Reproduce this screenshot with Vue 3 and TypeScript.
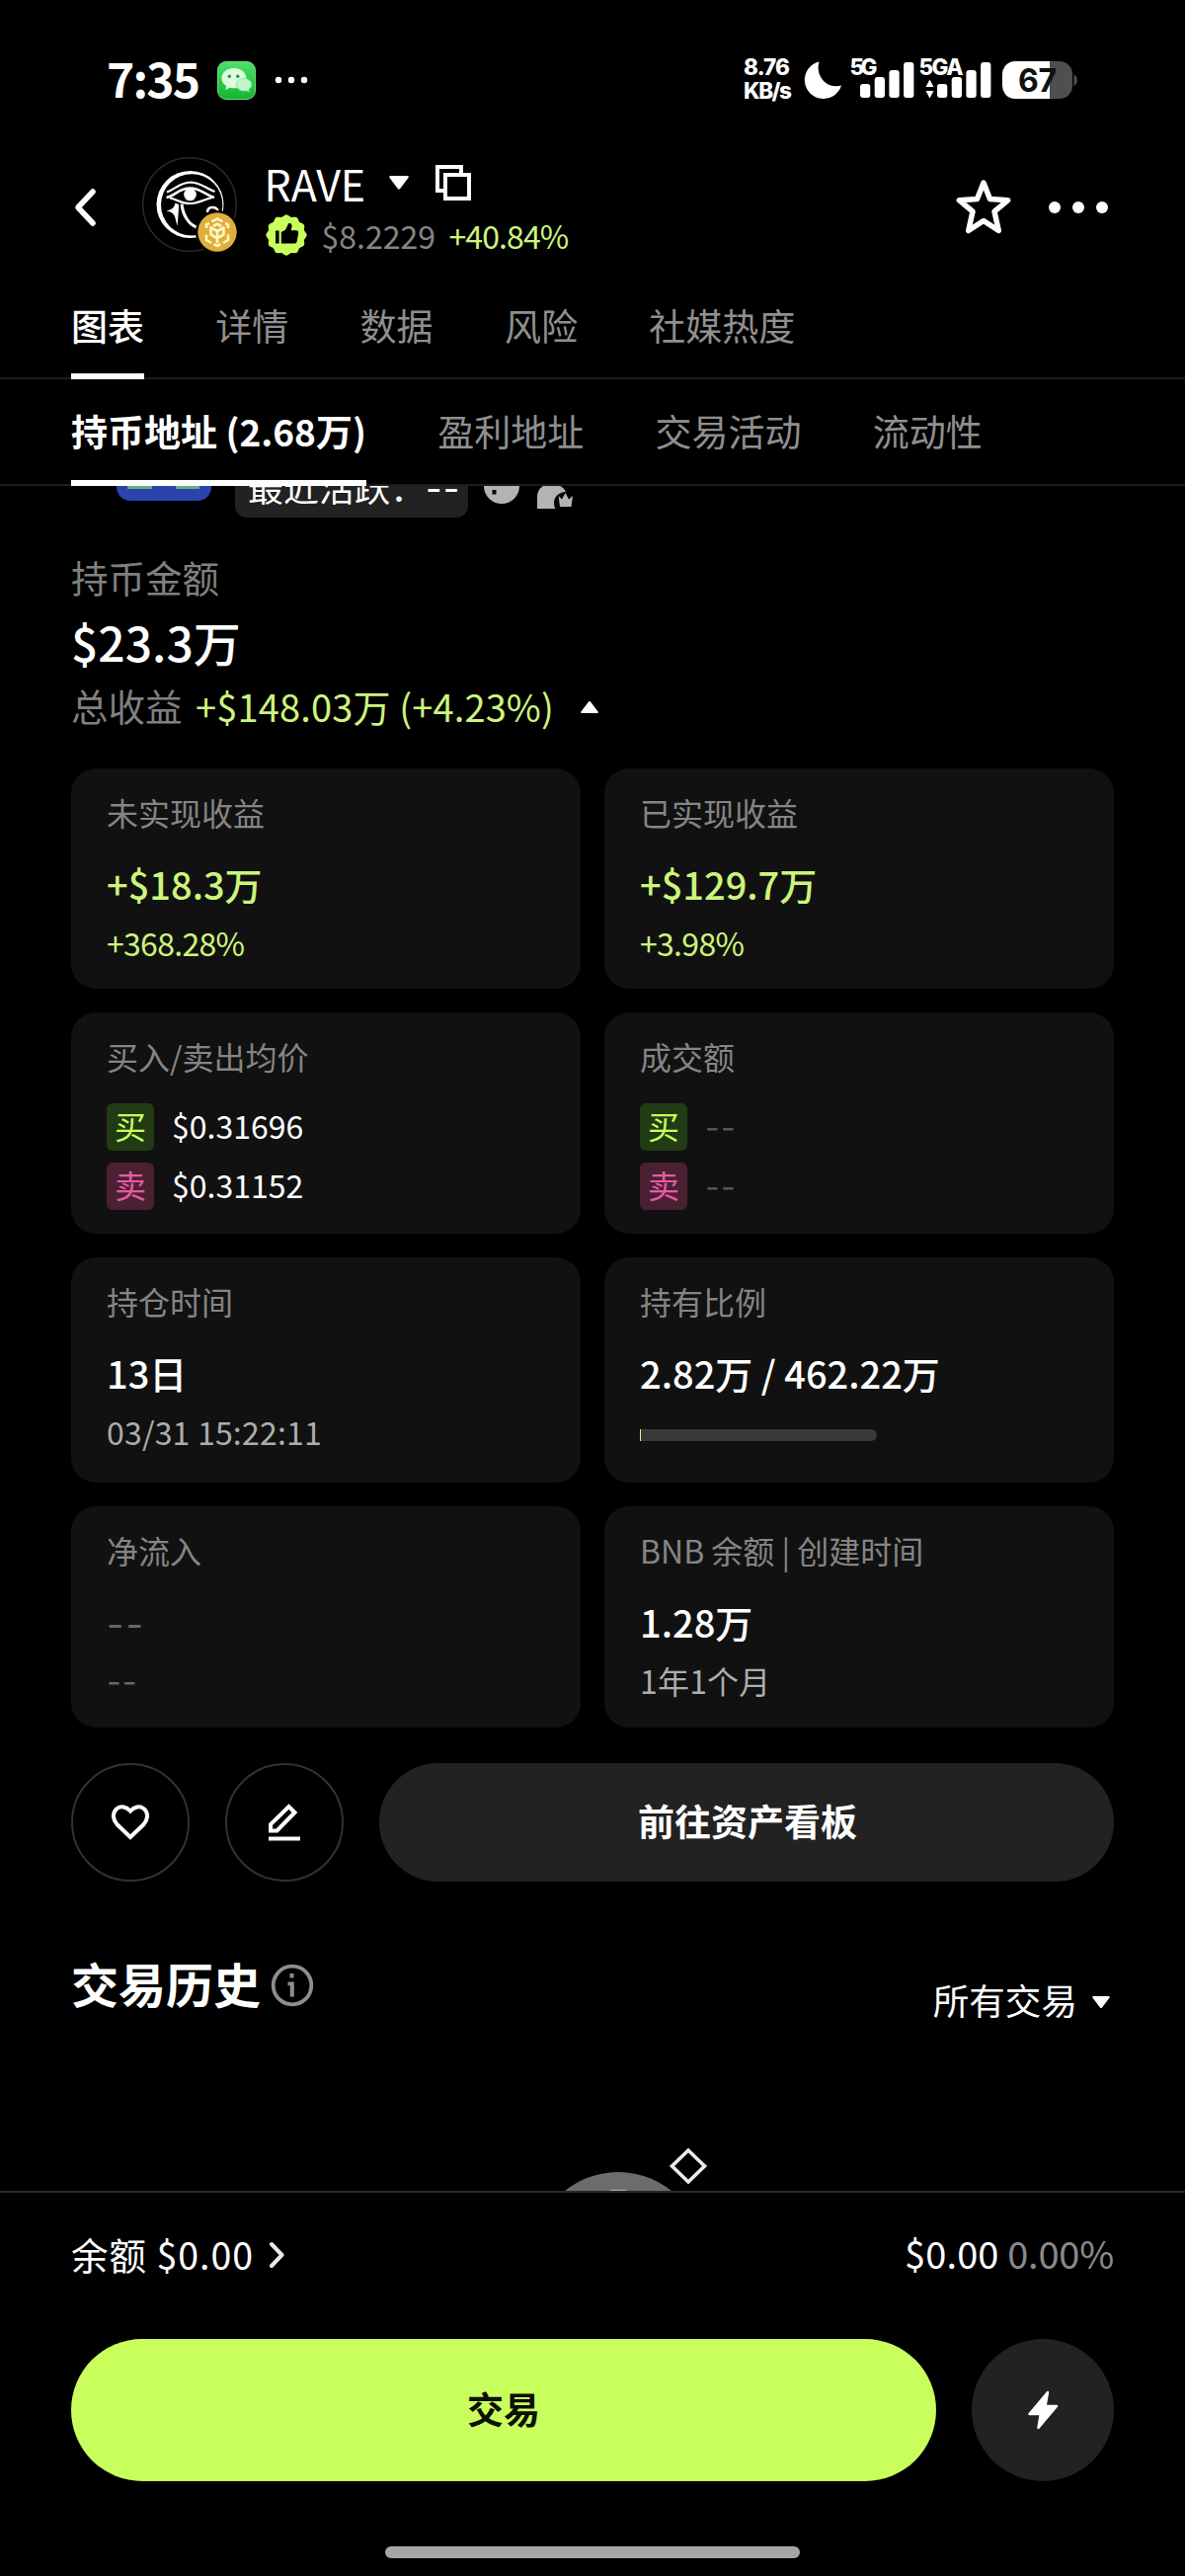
<script setup lang="ts">
interface StatCard {
  label: string
  kind: 'value' | 'trade' | 'progress'
  value?: string
  sub?: string
  tone?: 'up' | 'plain' | 'none'
  buy?: string
  sell?: string
  percent?: number
}

const mainTabs: string[] = ['图表', '详情', '数据', '风险', '社媒热度']
const subTabs: string[] = ['持币地址 (2.68万)', '盈利地址', '交易活动', '流动性']

const cards: StatCard[] = [
  { label: '未实现收益', kind: 'value', value: '+$18.3万', sub: '+368.28%', tone: 'up' },
  { label: '已实现收益', kind: 'value', value: '+$129.7万', sub: '+3.98%', tone: 'up' },
  { label: '买入/卖出均价', kind: 'trade', buy: '$0.31696', sell: '$0.31152' },
  { label: '成交额', kind: 'trade', buy: '--', sell: '--' },
  { label: '持仓时间', kind: 'value', value: '13日', sub: '03/31 15:22:11', tone: 'plain' },
  { label: '持有比例', kind: 'progress', value: '2.82万 / 462.22万', percent: 0.6 },
  { label: '净流入', kind: 'value', value: '--', sub: '--', tone: 'none' },
  { label: 'BNB 余额 | 创建时间', kind: 'value', value: '1.28万', sub: '1年1个月', tone: 'plain' },
]

// Scalloped outline of the "liked" badge: 12 bumps around a circle.
const sealPoints: string = Array.from({ length: 96 }, (_, i) => {
  const a = (i / 96) * Math.PI * 2
  const r = 19.7 + 1.0 * Math.cos(a * 12)
  return `${(21 + r * Math.sin(a)).toFixed(2)},${(21 - r * Math.cos(a)).toFixed(2)}`
}).join(' ')

const bars: { x: number; y: number }[] = [
  { x: 0, y: 22 },
  { x: 14.7, y: 15 },
  { x: 29.4, y: 8 },
  { x: 44.1, y: 0 },
]
</script>

<template>
  <div class="screen">
    <header class="status">
      <div class="status-left">
        <span class="clock">7:35</span>
        <svg class="wechat" width="39" height="39" viewBox="0 0 39 39">
          <defs>
            <linearGradient id="wx" x1="0" y1="0" x2="0" y2="1">
              <stop offset="0" stop-color="#4fe06a" />
              <stop offset="1" stop-color="#12b62f" />
            </linearGradient>
          </defs>
          <rect x="0.5" y="0.5" width="38" height="38" rx="8.5" fill="url(#wx)" stroke="#6fd882" />
          <path d="M16.8 7C9.8 7 4.4 11.500 4.400 17.200c0 3.300 1.800 6 4.700 7.900L8.300 29l4.300-2.300c1.300.4 2.700.6 4.200.6 7 0 12.600-4.500 12.600-10.100S23.800 7 16.800 7z" fill="#dcfbe0" />
          <path d="M27 17.500c-4.300 0-7.600 2.800-7.600 6.300s3.300 6.300 7.600 6.300c1 0 1.900-.1 2.700-.4l2.600 1.500-.5-2.600c1.900-1.100 3-2.900 3-4.800 0-3.500-3.400-6.300-7.800-6.300z" fill="#c4f6cb" stroke="#7fdc8d" stroke-width=".8" />
          <circle cx="12.300" cy="15.300" r="1.700" fill="#2c8f42" />
          <circle cx="20.800" cy="15.300" r="1.700" fill="#2c8f42" />
        </svg>
        <svg width="34" height="8" viewBox="0 0 34 8" fill="#fff">
          <circle cx="4" cy="4" r="3.200" /><circle cx="17" cy="4" r="3.200" /><circle cx="30" cy="4" r="3.200" />
        </svg>
      </div>
      <svg class="status-right" width="344" height="60" viewBox="750 49 344 60" fill="#fff">
        <g class="tiny">
          <text x="753" y="75.500" textLength="47">8.76</text>
          <text x="753" y="100" textLength="49">KB/s</text>
          <text x="860.500" y="75.500" textLength="28">5G</text>
          <text x="930.500" y="75.500" textLength="45">5GA</text>
        </g>
        <path d="M829.500 62.500A19 19 0 1 0 852 86.500c-6 1.800-13.500.5-18-4.500-5-5.500-6.500-13-4.500-19.500z" />
        <rect v-for="b in bars" :key="'a' + b.x" :x="871 + b.x" :y="63 + b.y" width="10.300" :height="36 - b.y" rx="3" />
        <rect v-for="b in bars" :key="'b' + b.x" :x="949 + b.x" :y="63 + b.y" width="10.300" :height="36 - b.y" rx="3" />
        <path d="M937.500 88l4-7.500 4 7.500zM937.500 92h8l-4 7.500z" />
        <path d="M1063 62h10a13 13 0 0 1 13 13v12a13 13 0 0 1-13 13h-10z" fill="#4f4f4f" />
        <path d="M1063 62h-35a13 13 0 0 0-13 13v12a13 13 0 0 0 13 13h35z" />
        <path d="M1087.500 75.500c4.500 2 4.500 9.500 0 11.500z" fill="#4f4f4f" />
        <text class="charge" x="1031" y="93" textLength="39">67</text>
      </svg>
    </header>

    <section class="token">
      <svg class="back" width="26" height="42" viewBox="0 0 26 42" fill="none" stroke="#fff" stroke-width="5.500" stroke-linecap="round" stroke-linejoin="round">
        <path d="M22 5L7 21l15 16" />
      </svg>
      <div class="avatar">
        <svg width="100" height="100" viewBox="-1 -1 100 100" fill="none">
          <circle cx="48" cy="48" r="47.300" stroke="#2b2b2b" stroke-width="1.500" />
          <path fill="#fff" fill-rule="evenodd" d="M48.500 14a34 34 0 1 0 0 68 34 34 0 1 0 0-68zM50.200 17.200a31.200 31.200 0 1 1 0 62.400 31.200 31.200 0 1 1 0-62.400z" />
          <path d="M25 35.500C34 32 38 26 49 25.500c11 .5 15 6 24.500 9.500" stroke="#fff" stroke-width="2.200" />
          <path d="M24.500 41c8-1.500 13-9.500 24-9.500s16 7.500 24.500 9.500" stroke="#fff" stroke-width="2.600" />
          <path d="M28 41.500c7 1 11 5.500 21 5.500 9 0 14-4.500 22-6" stroke="#fff" stroke-width="2.200" />
          <circle cx="48.500" cy="38" r="6.300" fill="#fff" />
          <path d="M33.500 46.500c-1 5-4 7-9 8 5 1 7 2.500 8.500 5.500l2.500 10c.8-8 1.500-15 1.500-22z" fill="#fff" />
          <path d="M40 47.500c1 11 7 21 16 24" stroke="#fff" stroke-width="3" />
          <path d="M66 56c0-6 9-7 11-1" stroke="#fff" stroke-width="2.500" />
        </svg>
        <svg class="chain" width="44" height="44" viewBox="0 0 44 44" fill="none">
          <circle cx="22" cy="22" r="22" fill="#000" />
          <circle cx="22" cy="22" r="19.700" fill="#dfae3c" />
          <g stroke="#fff6c4" stroke-width="2.600" stroke-linejoin="round">
            <path d="M16.500 11.300L22 8.300l5.500 3M11 18v-3.500l3-1.700M33 18v-3.500l-3-1.700M11 24.500v5.500l5 3M33 24.500v5.500l-5 3M18.500 34.200L22 36l3.500-1.800" />
            <path d="M15.500 17.300l6.500 3.800 6.500-3.800v7L22 28.300l-6.500-4zM22 21.100v7.200M22 28v5" />
            <path d="M18 16l4-2.300 4 2.300" />
          </g>
        </svg>
      </div>
      <div class="token-info">
        <div class="name-row">
          <span class="name">RAVE</span>
          <svg class="name-caret" width="20" height="14" viewBox="0 0 20 14"><path d="M1.500 0h17a1.200 1.200 0 0 1 1 2l-8.300 11a1.500 1.500 0 0 1-2.400 0L.5 2a1.200 1.200 0 0 1 1-2z" fill="#fff" /></svg>
          <svg width="36" height="36" viewBox="0 0 36 36" fill="none" stroke="#fff" stroke-width="4">
            <path d="M26 8V2H2v24h6" /><path d="M10 10h24v24H10z" />
          </svg>
        </div>
        <div class="price-row">
          <svg width="42" height="42" viewBox="0 0 42 42">
            <polygon :points="sealPoints" fill="#c9ff5c" />
            <path d="M10 16.500h3.600v13H10zM15.800 18l4.200-2.200 2.600-5.300c.5-1.200 1.500-1.700 2.600-1.200 1.300.6 1.600 2.100 1.300 3.500l-.8 3.500h5.200c1.700 0 2.600 1.200 2.300 2.900l-1.500 8c-.3 1.600-1.300 2.400-2.700 2.400H15.800z" fill="#000" />
          </svg>
          <span class="price">$8.2229</span>
          <span class="change">+40.84%</span>
        </div>
      </div>
      <svg class="star" width="60" height="60" viewBox="0 0 60 60" fill="none" stroke="#fff" stroke-width="5.500" stroke-linejoin="round">
        <path d="M30 5l6.500 16.500 18.200 1.200-13.700 11.500 4.300 19.300L30 43.500 14.700 53.500l4.300-19.300L5.300 22.700 23.500 21.500z" />
      </svg>
      <svg class="more" width="60" height="12" viewBox="0 0 60 12" fill="#fff">
        <circle cx="6" cy="6" r="6" /><circle cx="30" cy="6" r="6" /><circle cx="54" cy="6" r="6" />
      </svg>
    </section>

    <nav class="tabs tabs-main">
      <span v-for="(t, i) in mainTabs" :key="t" class="tab" :class="{ active: i === 0 }">{{ t }}</span>
    </nav>
    <nav class="tabs tabs-sub">
      <span v-for="(t, i) in subTabs" :key="t" class="tab" :class="{ active: i === 0 }">{{ t }}</span>
    </nav>

    <main class="content">
      <div class="peek">
        <svg class="peek-avatar" width="96" height="47" viewBox="0 0 96 47">
          <path d="M0 0h96v33a14 14 0 0 1-14 14H14A14 14 0 0 1 0 33z" fill="#2a43ad" />
          <path d="M11 0h25v35H11zM60 0h24v35H60z" fill="#67ad86" />
        </svg>
        <div class="tip">最近活跃：<span class="dash">--</span></div>
        <svg class="face" width="36" height="50" viewBox="0 0 36 50">
          <circle cx="18" cy="32" r="18" fill="#b3b3b3" />
          <path d="M8.500 36h4v4.500h-4z" fill="#000" />
        </svg>
        <svg class="vip" width="38" height="55" viewBox="0 0 38 55">
          <circle cx="16" cy="24" r="9" fill="#b3b3b3" />
          <path d="M0 55V43c0-8 6-13 14-13 7 0 13 3 15 8-7 0-12 5-12 11 0 2.500.5 4.500 1.500 6z" fill="#b3b3b3" />
          <path d="M21.500 42l3.500 3.500 3.500-6.500 3.500 6.500 4-3.500-1.500 11H23z" fill="#b3b3b3" />
        </svg>
      </div>

      <div class="label-lg">持币金额</div>
      <div class="amount">$23.3万</div>
      <div class="total">
        <span class="total-label">总收益</span>
        <span class="total-value">+$148.03万 (+4.23%)</span>
        <svg width="18" height="12" viewBox="0 0 18 12"><path d="M1.200 12h15.600a1 1 0 0 0 .8-1.600L10.200.7a1.500 1.500 0 0 0-2.400 0L.4 10.400A1 1 0 0 0 1.200 12z" fill="#fff" /></svg>
      </div>

      <div class="grid">
        <div v-for="c in cards" :key="c.label" class="card">
          <div class="card-label">{{ c.label }}</div>
          <template v-if="c.kind === 'trade'">
            <div class="trade buy"><span class="tag">买</span><span :class="{ dash: c.buy === '--' }">{{ c.buy }}</span></div>
            <div class="trade sell"><span class="tag">卖</span><span :class="{ dash: c.sell === '--' }">{{ c.sell }}</span></div>
          </template>
          <template v-else>
            <div class="card-value" :class="c.tone">{{ c.value }}</div>
            <div v-if="c.kind === 'progress'" class="track"><div class="fill" :style="{ width: c.percent + '%' }"></div></div>
            <div v-else class="card-sub" :class="c.tone">{{ c.sub }}</div>
          </template>
        </div>
      </div>

      <div class="actions">
        <button class="round">
          <svg width="38" height="36" viewBox="0 0 38 36" fill="none" stroke="#fff" stroke-width="4"><path d="M19 33L5.500 20C.5 14.500 1 7.500 5.500 4c4-3 9.500-2 13.500 2.500C23 2 28.500 1 32.500 4c4.500 3.500 5 10.500 0 16z" /></svg>
        </button>
        <button class="round">
          <svg width="32" height="38" viewBox="0 0 32 38" fill="none" stroke="#fff" stroke-width="4"><path d="M2 27.500V21L20.500 3l6 6L8.500 27.500z" /><path d="M0 35.500h32" /></svg>
        </button>
        <button class="board">前往资产看板</button>
      </div>

      <div class="history">
        <span class="history-title">交易历史</span>
        <svg class="info" width="44" height="44" viewBox="0 0 44 44" fill="none">
          <circle cx="22" cy="22" r="19.300" stroke="#8e8e8e" stroke-width="3.800" />
          <path d="M19.500 10h4v4.500h-4zM17.500 18.500h6.300v15h-4V22.300h-2.300z" fill="#8e8e8e" />
        </svg>
        <span class="filter">所有交易
          <svg width="18" height="12" viewBox="0 0 18 12"><path d="M1.200 0h15.600a1 1 0 0 1 .8 1.600l-7.400 9.700a1.500 1.500 0 0 1-2.400 0L.4 1.600A1 1 0 0 1 1.200 0z" fill="#fff" /></svg>
        </span>
      </div>

      <svg class="empty-art" width="160" height="48" viewBox="0 0 160 48">
        <circle cx="66" cy="115" r="86" fill="#6c6c6c" />
        <path d="M58 47.500h16" stroke="#a5aaa5" stroke-width="1.500" />
        <path d="M137 7l16.500 16L137 39l-16.500-16z" fill="none" stroke="#e9e9e9" stroke-width="3.600" />
      </svg>
    </main>

    <footer class="footer">
      <div class="balance">
        <span class="bal">余额 $0.00</span>
        <svg class="chev" width="16" height="28" viewBox="0 0 16 28" fill="none" stroke="#e8e8e8" stroke-width="4" stroke-linecap="round" stroke-linejoin="round"><path d="M3 3l10.500 11L3 25" /></svg>
        <span class="pnl">$0.00 <em>0.00%</em></span>
      </div>
      <div class="cta">
        <button class="trade-btn">交易</button>
        <button class="flash">
          <svg width="32" height="40" viewBox="0 0 32 40"><path d="M21 2L2.500 24h11.300l-2.300 14L30 16H18.500z" fill="#fff" stroke="#fff" stroke-width="2.500" stroke-linejoin="round" /></svg>
        </button>
      </div>
      <div class="home"></div>
    </footer>
  </div>
</template>

<style>
body {
  background: #000;
}
</style>

<style scoped>
.screen {
  width: 1200px;
  height: 2608px;
  display: flex;
  flex-direction: column;
  overflow: hidden;
  background: #000;
  color: #fff;
  font-family: "Noto Sans CJK SC", "Noto Sans", sans-serif;
  font-size: 37px;
  white-space: nowrap;
}
svg {
  display: block;
  flex: none;
}
button {
  border: 0;
  padding: 0;
  font: inherit;
  color: inherit;
}
.dash {
  font-family: Inter, sans-serif;
  letter-spacing: 1.300px;
}

/* status bar */
.status {
  height: 140px;
  box-sizing: border-box;
  padding: 49px 106px 0 108px;
  display: flex;
  justify-content: space-between;
  align-items: flex-start;
}
.status-left {
  display: flex;
  align-items: center;
  height: 64px;
}
.clock {
  width: 112px;
  font-size: 48px;
  font-weight: 700;
  line-height: 50px;
  margin-top: -6px;
  letter-spacing: -1.800px;
}
.wechat {
  margin-right: 18.500px;
}
.status-right {
  overflow: visible;
}
.tiny {
  font-family: Inter, sans-serif;
  font-size: 22.500px;
  font-weight: 800;
}
.charge {
  font-family: Inter, sans-serif;
  font-size: 32px;
  font-weight: 700;
  fill: #111;
}

/* token header */
.token {
  height: 140px;
  padding: 0 72px;
  display: flex;
  align-items: center;
}
.back {
  margin-right: 45px;
}
.avatar {
  position: relative;
  margin-top: -4px;
  width: 100px;
  height: 100px;
}
.chain {
  position: absolute;
  left: 55px;
  top: 55px;
}
.token-info {
  margin-left: 26px;
  flex: 1;
}
.name-row {
  display: flex;
  align-items: center;
  height: 52px;
  padding-top: 4px;
}
.name {
  font-size: 43px;
  line-height: 46px;
  width: 126px;
  margin-top: -1px;
  margin-left: -1.500px;
}
.name-caret {
  margin-right: 27px;
}
.price-row {
  display: flex;
  align-items: center;
  height: 54px;
  font-size: 32px;
  line-height: 50px;
}
.price {
  color: #858585;
  width: 129px;
  margin: -1px 0 0 14.500px;
}
.change {
  color: #cdf47c;
  margin-top: -1px;
  letter-spacing: -0.900px;
}
.star {
  margin-right: 36px;
}
.more {
  margin-right: 6px;
}

/* tabs */
.tabs {
  display: flex;
  gap: 72.300px;
  padding: 0 72px;
  box-sizing: border-box;
  border-bottom: 2px solid #1c1c1c;
}
.tabs-main {
  height: 104px;
}
.tabs-sub {
  height: 108px;
}
.tab {
  color: #8f8f8f;
  box-sizing: border-box;
}
.tabs-main .tab {
  line-height: 98px;
}
.tabs-sub .tab {
  line-height: 104px;
}
.tab.active {
  color: #fff;
  position: relative;
}
.tabs-main .active {
  font-weight: 500;
}
.tabs-sub .active {
  font-weight: 700;
}
.tab.active::after {
  content: "";
  position: absolute;
  left: 0;
  right: 0;
  bottom: -2px;
  height: 6px;
  background: #fff;
}

/* scrolling content */
.content {
  height: 1726px;
  padding: 0 72px;
  overflow: hidden;
}
.peek {
  height: 64px;
  margin-top: -32px;
  margin-left: 46px;
  display: flex;
  align-items: flex-start;
}
.tip {
  height: 64px;
  line-height: 65px;
  margin-left: 24px;
  width: 236px;
  box-sizing: border-box;
  padding-left: 13px;
  background: #222;
  border-radius: 12px;
  font-size: 36px;
}
.face {
  margin-left: 16px;
}
.vip {
  margin-left: 18px;
}
.label-lg {
  margin-top: 38px;
  line-height: 44px;
  color: #808080;
  font-size: 37.500px;
}
.amount {
  font-size: 48px;
  line-height: 87px;
  height: 85px;
  font-weight: 500;
}
.total {
  display: flex;
  align-items: center;
  height: 46px;
  line-height: 46px;
}
.total-label {
  color: #808080;
  font-size: 37.500px;
  width: 126px;
}
.total-value {
  color: #cdf47c;
  width: 390px;
  font-size: 38px;
  letter-spacing: 0.150px;
  margin-top: 1px;
}
.total svg {
  margin-top: 4px;
}
.grid {
  margin-top: 41px;
  display: grid;
  grid-template-columns: 516px 516px;
  grid-template-rows: 223px 224px 228px 224px;
  gap: 24px;
}
.card {
  background: #111;
  border-radius: 25px;
  padding: 22px 36px 0;
}
.card-label {
  line-height: 44px;
  font-size: 32px;
  color: #858585;
  margin-bottom: 26px;
}
.card-value {
  font-size: 38px;
  line-height: 50px;
  font-weight: 500;
}
.card-sub {
  margin-top: 12px;
  font-size: 32px;
  line-height: 44px;
  letter-spacing: 0.200px;
  color: #adadad;
}
.card-value.up,
.card-sub.up {
  color: #cdf47c;
}
.card-sub.up {
  letter-spacing: -0.700px;
}
.card-value.none,
.card-sub.none {
  font-family: Inter, sans-serif;
  font-weight: 400;
  color: #666;
}
.card-value.none {
  letter-spacing: 2px;
  line-height: 54px;
  height: 50px;
}
.card-sub.none {
  letter-spacing: 1px;
  line-height: 48px;
}
.trade {
  display: flex;
  height: 48px;
  margin-bottom: 12px;
  font-size: 32px;
  line-height: 44px;
}
.trade .dash {
  color: #555;
  line-height: 50px;
}
.tag {
  width: 48px;
  height: 48px;
  margin-right: 18px;
  border-radius: 6px;
  text-align: center;
}
.buy .tag {
  background: #213c14;
  color: #c9ff5c;
}
.sell .tag {
  background: #4a2132;
  color: #e55aa6;
}
.track {
  margin-top: 32px;
  width: 240px;
  height: 12px;
  border-radius: 0 6px 6px 0;
  background: #393939;
  overflow: hidden;
}
.fill {
  height: 12px;
  background: #dcf59a;
}
.actions {
  margin-top: 36px;
  display: flex;
  gap: 36px;
}
.round {
  width: 120px;
  height: 120px;
  box-sizing: border-box;
  border: 2.500px solid #323232;
  border-radius: 50%;
  background: none;
  display: flex;
  align-items: center;
  justify-content: center;
}
.board {
  flex: 1;
  height: 120px;
  border-radius: 60px;
  background: #222;
  font-weight: 700;
  font-size: 37px;
  line-height: 116px;
  padding: 0 0 4px 2px;
}
.history {
  margin-top: 66px;
  height: 73px;
  display: flex;
}
.history-title {
  font-size: 48px;
  font-weight: 700;
  line-height: 73px;
}
.info {
  margin: 17px 0 0 9.500px;
}
.filter {
  margin-left: auto;
  margin-right: 4px;
  display: flex;
  align-items: center;
  gap: 15px;
  font-size: 36.600px;
  line-height: 44px;
  height: 44px;
  margin-top: 31.500px;
}
.filter svg {
  margin-top: 4px;
}
.empty-art {
  margin: 126px 0 0 488px;
}

/* footer */
.footer {
  flex: 1;
  border-top: 2px solid #292929;
  background: #000;
}
.balance {
  display: flex;
  align-items: center;
  height: 124px;
  padding: 0 72px;
}
.bal {
  width: 200px;
  line-height: 50px;
  letter-spacing: 1px;
  font-size: 37.500px;
}
.chev {
  margin-top: 1px;
}
.pnl {
  margin-left: auto;
  line-height: 50px;
  margin-top: -2px;
  font-size: 38px;
  letter-spacing: 0.100px;
}
.pnl em {
  font-style: normal;
  color: #8a8a8a;
  margin-left: 0;
  letter-spacing: -0.200px;
}
.cta {
  margin-top: 24px;
  padding: 0 72px;
  display: flex;
  gap: 36px;
}
.trade-btn {
  flex: 1;
  height: 144px;
  border-radius: 72px;
  background: #c9ff5c;
  color: #0b0f05;
  font-size: 37px;
  font-weight: 700;
  padding-bottom: 5px;
}
.flash {
  width: 144px;
  height: 144px;
  border-radius: 50%;
  background: #222;
  display: flex;
  align-items: center;
  justify-content: center;
}
.home {
  width: 420px;
  height: 12px;
  border-radius: 6px;
  background: #a6a6a6;
  margin: 66px auto 0;
}
</style>
